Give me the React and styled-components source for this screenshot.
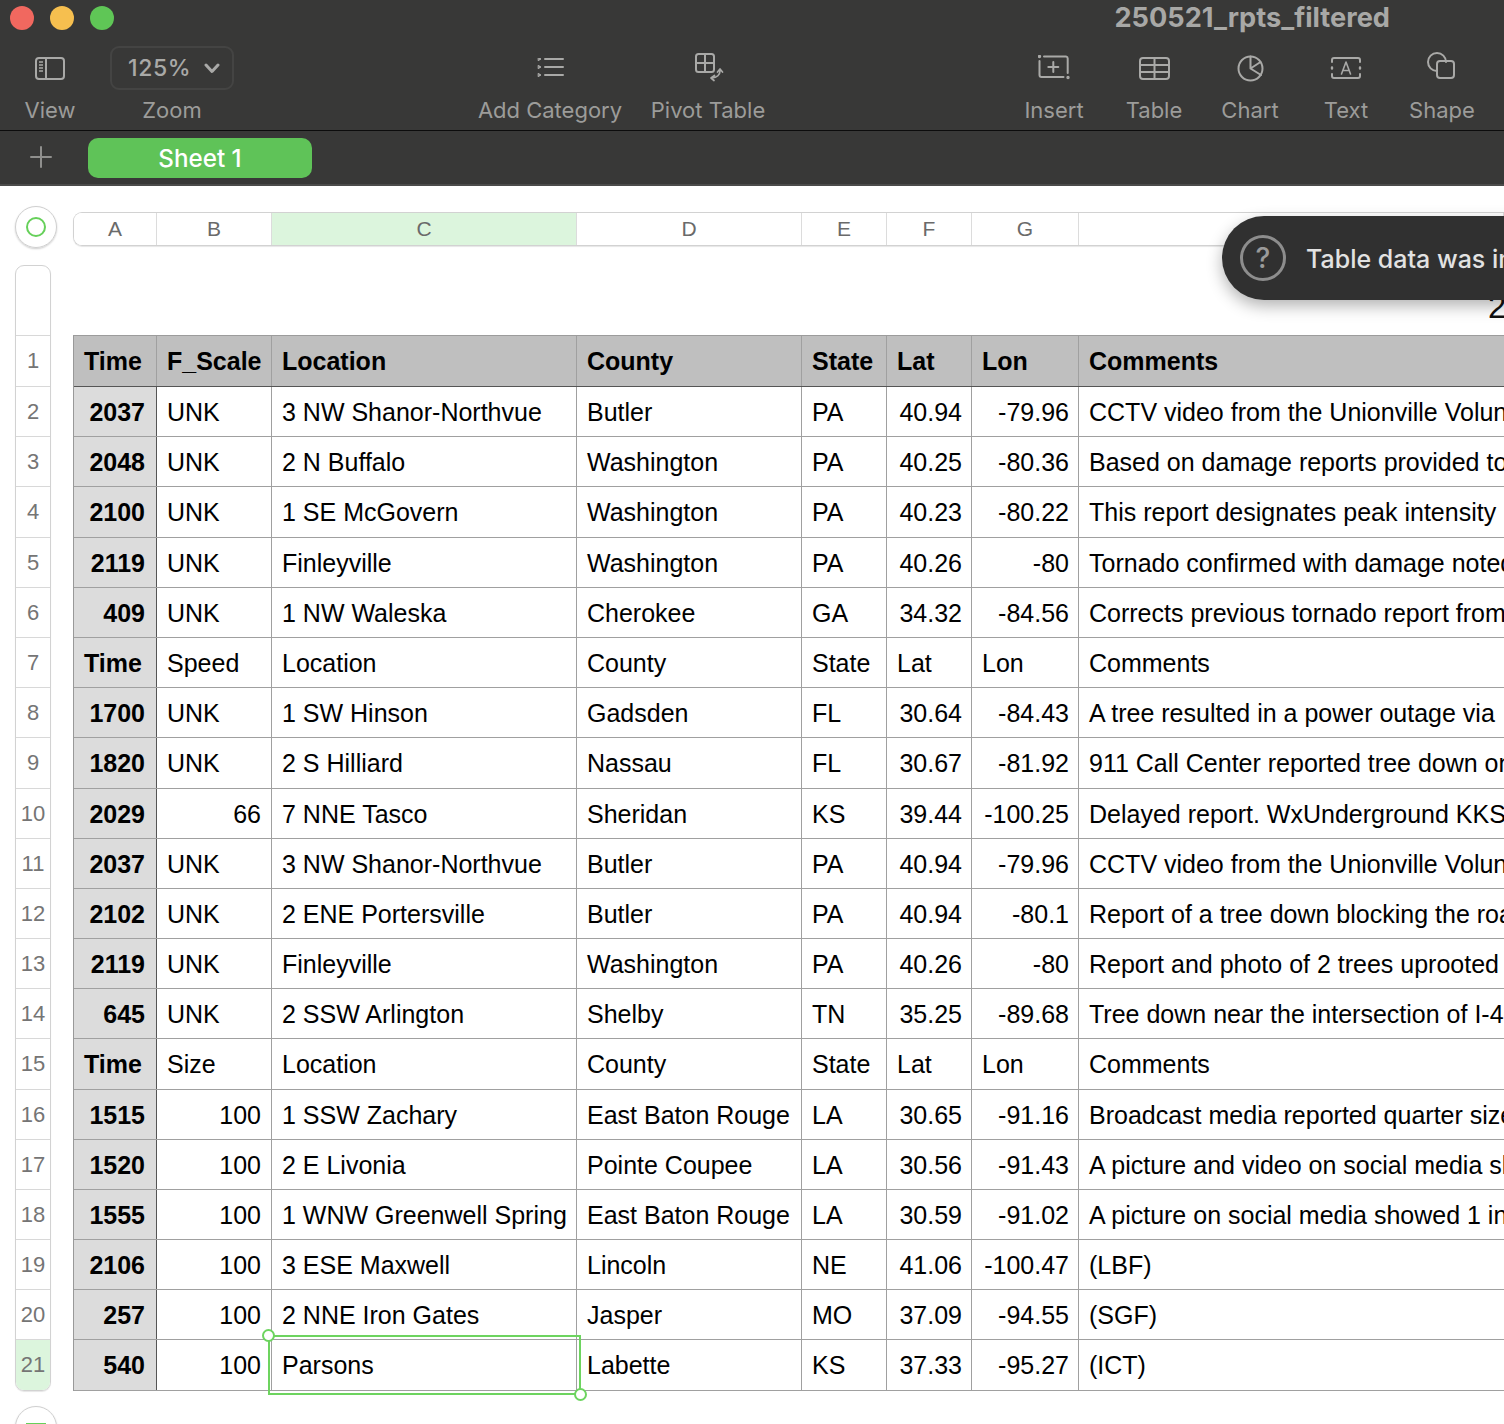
import React from 'react'
import styled, { createGlobalStyle } from 'styled-components'

const COLS = '83px 115px 305px 225px 85px 85px 107px 1fr'

// rows that came out one pixel taller in the scaled sheet, header is index 0
const TALL = [0, 3, 8, 14, 20]

const HEAD = ['Time', 'F_Scale', 'Location', 'County', 'State', 'Lat', 'Lon', 'Comments']

const ROWS = [
	[2037, 'UNK', '3 NW Shanor-Northvue', 'Butler', 'PA', 40.94, -79.96, 'CCTV video from the Unionville Volunteer'],
	[2048, 'UNK', '2 N Buffalo', 'Washington', 'PA', 40.25, -80.36, 'Based on damage reports provided to'],
	[2100, 'UNK', '1 SE McGovern', 'Washington', 'PA', 40.23, -80.22, 'This report designates peak intensity'],
	[2119, 'UNK', 'Finleyville', 'Washington', 'PA', 40.26, -80, 'Tornado confirmed with damage noted'],
	[409, 'UNK', '1 NW Waleska', 'Cherokee', 'GA', 34.32, -84.56, 'Corrects previous tornado report from'],
	['Time', 'Speed', 'Location', 'County', 'State', 'Lat', 'Lon', 'Comments'],
	[1700, 'UNK', '1 SW Hinson', 'Gadsden', 'FL', 30.64, -84.43, 'A tree resulted in a power outage via'],
	[1820, 'UNK', '2 S Hilliard', 'Nassau', 'FL', 30.67, -81.92, '911 Call Center reported tree down on'],
	[2029, 66, '7 NNE Tasco', 'Sheridan', 'KS', 39.44, -100.25, 'Delayed report. WxUnderground KKS'],
	[2037, 'UNK', '3 NW Shanor-Northvue', 'Butler', 'PA', 40.94, -79.96, 'CCTV video from the Unionville Volunteer'],
	[2102, 'UNK', '2 ENE Portersville', 'Butler', 'PA', 40.94, -80.1, 'Report of a tree down blocking the road'],
	[2119, 'UNK', 'Finleyville', 'Washington', 'PA', 40.26, -80, 'Report and photo of 2 trees uprooted'],
	[645, 'UNK', '2 SSW Arlington', 'Shelby', 'TN', 35.25, -89.68, 'Tree down near the intersection of I-40'],
	['Time', 'Size', 'Location', 'County', 'State', 'Lat', 'Lon', 'Comments'],
	[1515, 100, '1 SSW Zachary', 'East Baton Rouge', 'LA', 30.65, -91.16, 'Broadcast media reported quarter size'],
	[1520, 100, '2 E Livonia', 'Pointe Coupee', 'LA', 30.56, -91.43, 'A picture and video on social media show'],
	[1555, 100, '1 WNW Greenwell Spring', 'East Baton Rouge', 'LA', 30.59, -91.02, 'A picture on social media showed 1 inch'],
	[2106, 100, '3 ESE Maxwell', 'Lincoln', 'NE', 41.06, -100.47, '(LBF)'],
	[257, 100, '2 NNE Iron Gates', 'Jasper', 'MO', 37.09, -94.55, '(SGF)'],
	[540, 100, 'Parsons', 'Labette', 'KS', 37.33, -95.27, '(ICT)'],
]

const LETTERS = ['A', 'B', 'C', 'D', 'E', 'F', 'G', '']

const Global = createGlobalStyle`
	html, body {
		margin: 0;
		padding: 0;
		background: #fff;
	}
	body {
		font-family: 'Liberation Sans', Arial, sans-serif;
	}
`

const Page = styled.div`
	position: relative;
	width: 1504px;
	height: 1424px;
	overflow: hidden;
	background: #fff;
`

const Chrome = styled.header`
	background: #383837;
	color: #9c9c9a;
	font-family: Inter, 'Liberation Sans', sans-serif;
`

const TitleRow = styled.div`
	display: flex;
	align-items: center;
	gap: 16px;
	height: 36px;
	padding: 0 114px 0 10px;
`

const Light = styled.span`
	width: 24px;
	height: 24px;
	border-radius: 50%;
	background: ${(p) => p.$color};
`

const DocTitle = styled.div`
	margin: -2px 0 0 auto;
	font-size: 27.2px;
	font-weight: 700;
	color: #a8a8a6;
	white-space: nowrap;
`

const Toolbar = styled.div`
	display: flex;
	height: 94px;
	border-bottom: 1px solid #0c0c0c;
`

const Tool = styled.div`
	display: flex;
	flex-direction: column;
	align-items: center;
	width: ${(p) => p.$w}px;
	flex: none;
`

const Gap = styled.div`
	width: ${(p) => p.$w}px;
	flex: none;
`

const ToolIcon = styled.div`
	display: flex;
	align-items: center;
	justify-content: center;
	height: 44px;
	margin-top: 10px;
	color: #a9a9a7;
`

const ToolLabel = styled.div`
	margin-top: 7px;
	font-size: 22px;
	line-height: 26px;
	white-space: nowrap;
`

const ZoomBox = styled.div`
	display: flex;
	align-items: center;
	gap: 13px;
	height: 44px;
	box-sizing: border-box;
	width: 124px;
	padding-left: 16px;
	border: 2px solid #444443;
	border-radius: 9px;
	font-size: 23px;
	font-weight: 500;
	letter-spacing: 0.6px;
	color: #a9a9a7;
`

const TabBar = styled.div`
	display: flex;
	align-items: center;
	height: 53px;
	padding: 0 0 0 30px;
	border-bottom: 2px solid #4b4b4a;
`

const AddTab = styled.div`
	display: flex;
	width: 58px;
	margin-top: -2px;
	color: #8f8f8d;
`

const SheetTab = styled.div`
	display: flex;
	align-items: center;
	justify-content: center;
	width: 224px;
	height: 40px;
	padding-top: 2px;
	box-sizing: border-box;
	border-radius: 10px;
	background: #5fc358;
	color: #fff;
	font-size: 24.2px;
	font-weight: 500;
`

const Canvas = styled.main`
	display: flex;
`

const Rail = styled.div`
	flex: none;
	width: 73px;
	padding: 20px 0 0 15px;
	box-sizing: border-box;
`

const RoundButton = styled.div`
	display: flex;
	align-items: ${(p) => (p.$low ? 'flex-start' : 'center')};
	justify-content: center;
	box-sizing: border-box;
	width: 42px;
	height: 42px;
	padding-top: ${(p) => (p.$low ? '16px' : '0')};
	border: 1px solid #cfcfcf;
	border-radius: 50%;
	box-shadow: 0 1px 2px rgba(0, 0, 0, 0.2);
`

const Ring = styled.span`
	width: 20px;
	height: 20px;
	box-sizing: border-box;
	border: 2px solid #66d05a;
	border-radius: 50%;
`

const AddMark = styled.span`
	width: 18px;
	height: 18px;
	border: 1px solid #66d05a;
`

const RowRuler = styled.div`
	width: 36px;
	margin: 17px 0 15px;
	box-sizing: border-box;
	border: 1px solid #d2d2d2;
	border-radius: 9px;
	box-shadow: 0 1px 1px rgba(0, 0, 0, 0.1);
	overflow: hidden;
`

const RulerBlank = styled.div`
	height: 69px;
`

const RulerCell = styled.div`
	height: ${(p) => (p.$tall ? 51 : 50)}px;
	padding-top: 10px;
	box-sizing: border-box;
	border-top: 1px solid #d8d8d8;
	background: ${(p) => (p.$active ? '#dcf5dd' : '#fff')};
	color: #757575;
	font-size: 22px;
	line-height: 30px;
	text-align: center;
`

const Work = styled.div`
	flex: 1;
	min-width: 0;
	padding-top: 26px;
`

const ColRuler = styled.div`
	display: grid;
	grid-template-columns: ${COLS};
	height: 34px;
	box-sizing: border-box;
	border: 1px solid #d2d2d2;
	border-right: 0;
	border-radius: 9px 0 0 9px;
	box-shadow: 0 1px 1px rgba(0, 0, 0, 0.1);
	overflow: hidden;
`

const ColCell = styled.div`
	display: flex;
	align-items: center;
	justify-content: center;
	border-right: 1px solid #dcdcdc;
	background: ${(p) => (p.$active ? '#dcf5dd' : '#fff')};
	color: #6a6a6a;
	font-size: 21px;
`

const TableTitle = styled.div`
	height: 89px;
	box-sizing: border-box;
	padding: 41px 0 0 1415px;
	font-size: 33px;
	line-height: 40px;
	white-space: nowrap;
	color: #111;
`

const Grid = styled.div`
	border-left: 1px solid #999;
	border-top: 1px solid #9c9c9c;
`

const Row = styled.div`
	display: grid;
	grid-template-columns: ${COLS};
	height: ${(p) => (p.$tall ? 51 : 50)}px;
	box-sizing: border-box;
	border-bottom: 1px solid ${(p) => (p.$head ? '#555' : '#a0a0a0')};
`

const Cell = styled.div`
	position: relative;
	min-width: 0;
	padding: 10px ${(p) => p.$pad ?? 10}px 0 10px;
	box-sizing: border-box;
	border-right: 1px solid ${(p) => (p.$dark ? '#555' : '#a0a0a0')};
	background: ${(p) => p.$bg || 'transparent'};
	color: #000;
	font-size: 25px;
	line-height: 30px;
	font-weight: ${(p) => (p.$bold ? 700 : 400)};
	text-align: ${(p) => (p.$right ? 'right' : 'left')};
	white-space: nowrap;
	overflow: ${(p) => (p.$open ? 'visible' : 'hidden')};

	&:last-child {
		border-right: 0;
	}
`

const Selection = styled.div`
	position: absolute;
	inset: -5px -5px -5px -4px;
	border: 2px solid #6dd45f;
	pointer-events: none;
`

const Handle = styled.span`
	position: absolute;
	width: 13px;
	height: 13px;
	box-sizing: border-box;
	border: 2px solid #6dd45f;
	border-radius: 50%;
	background: #fff;
	${(p) => (p.$end ? 'right: -8px; bottom: -8px;' : 'left: -8px; top: -8px;')}
`

const Toast = styled.div`
	position: absolute;
	left: 1222px;
	top: 216px;
	display: flex;
	align-items: center;
	gap: 20px;
	width: 620px;
	height: 84px;
	padding-left: 18px;
	box-sizing: border-box;
	border-radius: 42px;
	background: #303030;
	box-shadow: 0 6px 16px rgba(0, 0, 0, 0.3);
	color: #e2e2e2;
	font-family: Inter, 'Liberation Sans', sans-serif;
	font-size: 25px;
	font-weight: 500;
	white-space: nowrap;
`

const ToastText = styled.span`
	margin-top: 2px;
`

const Question = styled.span`
	display: flex;
	align-items: center;
	justify-content: center;
	width: 46px;
	height: 46px;
	box-sizing: border-box;
	border: 3px solid #8d8d8d;
	border-radius: 50%;
	color: #9a9a9a;
	font-size: 28px;
	font-weight: 500;
`

const Stroke = ({ w, h, children }) => (
	<svg width={w} height={h} viewBox={`0 0 ${w} ${h}`} fill="none" stroke="currentColor" strokeWidth="2" strokeLinecap="round" strokeLinejoin="round">
		{children}
	</svg>
)

const ViewIcon = () => (
	<Stroke w={30} h={23}>
		<rect x="1" y="1" width="28" height="21" rx="3" />
		<path d="M11 1v21" />
		<path d="M4 5h4M4 8h4M4 11h4M4 14h4" strokeWidth="1.5" strokeLinecap="butt" />
	</Stroke>
)

const Chevron = () => (
	<svg width="16" height="11" viewBox="0 0 16 11" fill="none" stroke="currentColor" strokeWidth="3" strokeLinecap="round" strokeLinejoin="round">
		<path d="M2 2l6 6.5L14 2" />
	</svg>
)

const ListIcon = () => (
	<Stroke w={28} h={20}>
		<path d="M9 1h18M9 9h18M9 17h18" />
		<path d="M2.5-.5L5 1 2.5 2.5zM2.5 7.5L5 9l-2.5 1.5zM2.5 15.5L5 17l-2.5 1.5z" strokeWidth="1" fill="currentColor" />
	</Stroke>
)

const PivotIcon = () => (
	<Stroke w={32} h={30}>
		<rect x="4" y="1" width="18" height="18" rx="2.5" />
		<path d="M13 1v18M4 10h18" />
		<path d="M28 18c0 3.5-3 6.5-8 7M25.500 19L28 16l2.500 3M22.500 22.500L19 25l3 2.500" strokeWidth="1.700" />
	</Stroke>
)

const InsertIcon = () => (
	<Stroke w={32} h={26}>
		<path d="M1.500 6v14a2 2 0 0 0 2 2h22M6 1.500h22a2 2 0 0 1 1.700 2V18" />
		<path d="M15.300 7v10M10.300 12h10" />
		<circle cx="1.500" cy="1.500" r="0.7" fill="currentColor" />
		<circle cx="30" cy="22.500" r="0.7" fill="currentColor" />
	</Stroke>
)

const TableIcon = () => (
	<Stroke w={31} h={23}>
		<rect x="1" y="1" width="29" height="21" rx="3" />
		<path d="M1 8h29M1 15h29M15.500 1v21" />
	</Stroke>
)

const ChartIcon = () => (
	<Stroke w={27} h={27}>
		<circle cx="13.500" cy="13.500" r="12" />
		<path d="M13.500 1.500v12l10.500 6.500M13.500 13.500l10-6.500" />
	</Stroke>
)

const TextIcon = () => (
	<svg width="32" height="24" viewBox="0 0 32 24" fill="none" stroke="currentColor" strokeWidth="2" strokeLinecap="round" strokeLinejoin="round">
		<path d="M2 6V4a2 2 0 0 1 2-2h24a2 2 0 0 1 2 2v2M2 18v2a2 2 0 0 0 2 2h24a2 2 0 0 0 2-2v-2" />
		<path d="M2 11.500v1M30 11.500v1" strokeWidth="2.400" />
		<path d="M11.500 18l4.500-12 4.500 12M13 14.500h6" strokeWidth="1.600" />
	</svg>
)

const ShapeIcon = () => (
	<Stroke w={30} h={32}>
		<path d="M10 19A9 9 0 1 1 19 10" />
		<rect x="10" y="9" width="17" height="17" rx="3" />
	</Stroke>
)

const PlusIcon = () => (
	<svg width="22" height="22" viewBox="0 0 22 22" fill="none" stroke="currentColor" strokeWidth="2" strokeLinecap="round">
		<path d="M11 1v20M1 11h20" />
	</svg>
)

function BodyCell({ value, col, rowIndex }) {
	const numeric = typeof value === 'number'
	const selected = rowIndex === ROWS.length - 1 && col === 2
	if (col === 0) {
		return (
			<Cell $bg="#dcdcdc" $dark $bold $right={numeric} $pad={11}>
				{value}
			</Cell>
		)
	}
	return (
		<Cell $right={numeric} $open={selected} $pad={col === 1 ? 10 : 9}>
			{value}
			{selected && (
				<Selection>
					<Handle />
					<Handle $end />
				</Selection>
			)}
		</Cell>
	)
}

export default function App() {
	return (
		<Page>
			<Global />
			<Chrome>
				<TitleRow>
					<Light $color="#f1685f" />
					<Light $color="#f6bf4f" />
					<Light $color="#5fc656" />
					<DocTitle>250521_rpts_filtered</DocTitle>
				</TitleRow>
				<Toolbar>
					<Tool $w={100}>
						<ToolIcon><ViewIcon /></ToolIcon>
						<ToolLabel>View</ToolLabel>
					</Tool>
					<Tool $w={144}>
						<ToolIcon>
							<ZoomBox>125%<Chevron /></ZoomBox>
						</ToolIcon>
						<ToolLabel>Zoom</ToolLabel>
					</Tool>
					<Gap $w={226} />
					<Tool $w={160}>
						<ToolIcon><ListIcon /></ToolIcon>
						<ToolLabel>Add Category</ToolLabel>
					</Tool>
					<Tool $w={156}>
						<ToolIcon><PivotIcon /></ToolIcon>
						<ToolLabel>Pivot Table</ToolLabel>
					</Tool>
					<Gap $w={218} />
					<Tool $w={100}>
						<ToolIcon><InsertIcon /></ToolIcon>
						<ToolLabel>Insert</ToolLabel>
					</Tool>
					<Tool $w={100}>
						<ToolIcon><TableIcon /></ToolIcon>
						<ToolLabel>Table</ToolLabel>
					</Tool>
					<Tool $w={92}>
						<ToolIcon><ChartIcon /></ToolIcon>
						<ToolLabel>Chart</ToolLabel>
					</Tool>
					<Tool $w={100}>
						<ToolIcon><TextIcon /></ToolIcon>
						<ToolLabel>Text</ToolLabel>
					</Tool>
					<Tool $w={92}>
						<ToolIcon><ShapeIcon /></ToolIcon>
						<ToolLabel>Shape</ToolLabel>
					</Tool>
				</Toolbar>
				<TabBar>
					<AddTab><PlusIcon /></AddTab>
					<SheetTab>Sheet 1</SheetTab>
				</TabBar>
			</Chrome>
			<Canvas>
				<Rail>
					<RoundButton><Ring /></RoundButton>
					<RowRuler>
						<RulerBlank />
						{[HEAD, ...ROWS].map((_, i) => (
							<RulerCell key={i} $tall={TALL.includes(i)} $active={i === ROWS.length}>{i + 1}</RulerCell>
						))}
					</RowRuler>
					<RoundButton $low><AddMark /></RoundButton>
				</Rail>
				<Work>
					<ColRuler>
						{LETTERS.map((l, i) => (
							<ColCell key={i} $active={l === 'C'}>{l}</ColCell>
						))}
					</ColRuler>
					<TableTitle>250521_rpts_filtered</TableTitle>
					<Grid>
						<Row $head $tall>
							{HEAD.map((h) => (
								<Cell key={h} $bg="#bfbfbf" $bold>{h}</Cell>
							))}
						</Row>
						{ROWS.map((row, r) => (
							<Row key={r} $tall={TALL.includes(r + 1)}>
								{row.map((v, c) => (
									<BodyCell key={c} value={v} col={c} rowIndex={r} />
								))}
							</Row>
						))}
					</Grid>
				</Work>
			</Canvas>
			<Toast>
				<Question>?</Question>
				<ToastText>Table data was imported</ToastText>
			</Toast>
		</Page>
	)
}
